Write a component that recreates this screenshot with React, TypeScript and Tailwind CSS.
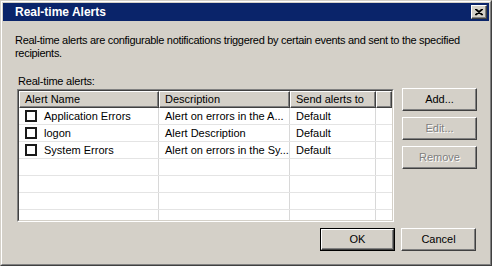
import React from 'react';

type Alert = { name: string; description: string; sendTo: string };

const alerts: Alert[] = [
  { name: 'Application Errors', description: 'Alert on errors in the A...', sendTo: 'Default' },
  { name: 'logon', description: 'Alert Description', sendTo: 'Default' },
  { name: 'System Errors', description: 'Alert on errors in the Sy...', sendTo: 'Default' },
];

const cols = 'grid grid-cols-[140px_131px_86px_16px]';

const Button: React.FC<{ label: string; disabled?: boolean; isDefault?: boolean }> = ({ label, disabled, isDefault }) => {
  const face = (
    <div className="h-full w-full border border-t-white border-l-white border-r-[#404040] border-b-[#404040] shadow-[inset_-1px_-1px_0_#808080] flex items-center justify-center bg-[#d4d0c8]">
      <span className={disabled ? 'text-[#808080] [text-shadow:1px_1px_0_#ffffff]' : 'text-black'}>{label}</span>
    </div>
  );
  if (isDefault) {
    return <div className="w-[75px] h-[23px] border border-black">{face}</div>;
  }
  return <div className="w-[75px] h-[23px]">{face}</div>;
};

const Checkbox: React.FC = () => (
  <div className="w-[12px] h-[12px] border-2 border-[#1a1a1a] bg-white shrink-0" />
);

export default function App() {
  const emptyRows = 4;
  return (
    <div
      className="w-[492px] h-[266px] bg-[#d4d0c8] text-[11px] leading-[13px] text-black border border-t-[#d4d0c8] border-l-[#d4d0c8] border-r-[#404040] border-b-[#404040]"
      style={{ fontFamily: '"Liberation Sans", Arial, sans-serif' }}
    >
      <div className="h-full border border-t-white border-l-white border-r-[#808080] border-b-[#808080] p-[1px] flex flex-col">
        {/* Title bar */}
        <div className="h-[18px] bg-[#0a246a] flex items-center justify-between pl-[12px] pr-[2px]">
          <span className="text-white font-bold text-[12px]">Real-time Alerts</span>
          <div className="w-[16px] h-[14px] bg-[#d4d0c8] border border-t-white border-l-white border-r-[#404040] border-b-[#404040] shadow-[inset_-1px_-1px_0_#808080] flex items-center justify-center">
            <svg width="8" height="7" viewBox="0 0 8 7">
              <path d="M0 0 L7 6 M1 0 L8 6 M7 0 L0 6 M8 0 L1 6" stroke="#000" strokeWidth="1.2" />
            </svg>
          </div>
        </div>

        {/* Body */}
        <div className="flex-1 flex flex-col pl-[12px] pr-[12px]">
          <p className="mt-[13px] w-[466px] tracking-[-0.3px]">
            Real-time alerts are configurable notifications triggered by certain events and sent to the specified recipients.
          </p>
          <div className="mt-[15px] pl-[3px] tracking-[-0.2px]">Real-time alerts:</div>

          <div className="mt-[1px] flex gap-[8px] pl-[2px]">
            {/* List view */}
            <div className="w-[377px] h-[133px] border border-t-[#808080] border-l-[#808080] border-r-white border-b-white">
              <div className="h-full border border-t-[#404040] border-l-[#404040] border-r-[#d4d0c8] border-b-[#d4d0c8] bg-white overflow-hidden">
                <div className={`${cols} h-[17px] bg-[#d4d0c8]`}>
                  {['Alert Name', 'Description', 'Send alerts to', ''].map((h, i) => (
                    <div
                      key={i}
                      className="border border-t-white border-l-white border-r-[#404040] border-b-[#404040] shadow-[inset_-1px_-1px_0_#808080] pl-[5px] flex items-center truncate"
                    >
                      {h}
                    </div>
                  ))}
                </div>
                {alerts.map((a) => (
                  <div key={a.name} className={`${cols} h-[17px] border-b border-[#e4e4e4]`}>
                    <div className="flex items-center gap-[7px] pl-[6px] border-r border-[#d8d8d8]">
                      <Checkbox />
                      <span>{a.name}</span>
                    </div>
                    <div className="flex items-center pl-[6px] border-r border-[#d8d8d8] truncate">{a.description}</div>
                    <div className="flex items-center pl-[6px] border-r border-[#d8d8d8]">{a.sendTo}</div>
                    <div />
                  </div>
                ))}
                {Array.from({ length: emptyRows }).map((_, i) => (
                  <div key={i} className={`${cols} h-[17px] border-b border-[#e4e4e4]`}>
                    <div className="border-r border-[#d8d8d8]" />
                    <div className="border-r border-[#d8d8d8]" />
                    <div className="border-r border-[#d8d8d8]" />
                    <div />
                  </div>
                ))}
              </div>
            </div>

            {/* Side buttons */}
            <div className="flex flex-col gap-[6px] -mt-[1px]">
              <Button label="Add..." />
              <Button label="Edit..." disabled />
              <Button label="Remove" disabled />
            </div>
          </div>

          <div className="mt-[6px] flex justify-end gap-[6px] pr-[1px]">
            <Button label="OK" isDefault />
            <Button label="Cancel" />
          </div>
        </div>
      </div>
    </div>
  );
}
